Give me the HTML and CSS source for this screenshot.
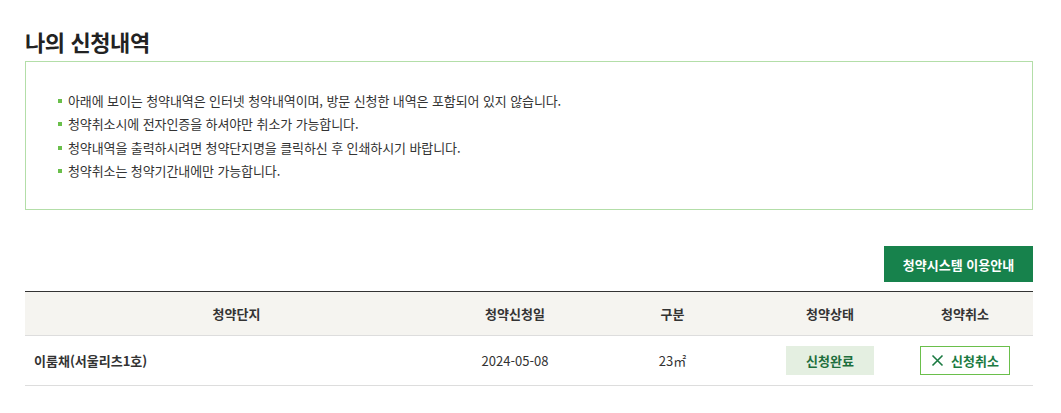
FILE: index.html
```html
<!DOCTYPE html>
<html lang="ko">
<head>
<meta charset="utf-8">
<title>나의 신청내역</title>
<link rel="stylesheet" href="styles.css">
</head>
<body>
<div class="page">
  <h2 class="title">나의 신청내역</h2>
  <div class="notice">
    <ul class="notice-list">
      <li>아래에 보이는 청약내역은 인터넷 청약내역이며, 방문 신청한 내역은 포함되어 있지 않습니다.</li>
      <li>청약취소시에 전자인증을 하셔야만 취소가 가능합니다.</li>
      <li>청약내역을 출력하시려면 청약단지명을 클릭하신 후 인쇄하시기 바랍니다.</li>
      <li>청약취소는 청약기간내에만 가능합니다.</li>
    </ul>
  </div>
  <div class="btn-row">
    <a class="btn-guide" href="#">청약시스템 이용안내</a>
  </div>
  <table class="list">
    <colgroup>
      <col class="c1"><col class="c2"><col class="c3"><col class="c4"><col class="c5">
    </colgroup>
    <thead>
      <tr>
        <th>청약단지</th>
        <th>청약신청일</th>
        <th>구분</th>
        <th>청약상태</th>
        <th>청약취소</th>
      </tr>
    </thead>
    <tbody>
      <tr>
        <td class="name">이룸채(서울리츠1호)</td>
        <td>2024-05-08</td>
        <td>23㎡</td>
        <td><span class="status">신청완료</span></td>
        <td><a class="btn-cancel" href="#"><svg width="13" height="13" viewBox="0 0 13 13" aria-hidden="true"><path d="M1.5 1.5L11.5 11.5M11.5 1.5L1.5 11.5" stroke="#1b7a42" stroke-width="1.6" fill="none"/></svg>신청취소</a></td>
      </tr>
    </tbody>
  </table>
</div>
</body>
</html>
```
FILE: styles.css
```css
html, body {
  margin: 0;
  padding: 0;
  background: #fff;
}
body {
  font-family: "Noto Sans CJK KR", "Noto Sans", sans-serif;
  color: #333;
  font-size: 13px;
}
.page {
  width: 1008px;
  margin-left: 25px;
  padding-top: 27px;
}
.title {
  margin: 0 0 6px;
  font-size: 22px;
  line-height: 28px;
  font-weight: 700;
  color: #222;
  letter-spacing: -0.4px;
}
.notice {
  border: 1px solid #b3dea8;
  padding: 27px 32px 27px 32px;
}
.notice-list {
  margin: 0;
  padding: 0;
  list-style: none;
}
.notice-list li {
  position: relative;
  padding-left: 10px;
  line-height: 23.3px;
  font-size: 13px;
  color: #333;
  letter-spacing: -0.1px;
}
.notice-list li::before {
  content: "";
  position: absolute;
  left: 0;
  top: 10px;
  width: 4px;
  height: 4px;
  background: #6abf4b;
}
.btn-row {
  display: flex;
  justify-content: flex-end;
  margin-top: 36px;
  margin-bottom: 9px;
}
.btn-guide {
  display: flex;
  align-items: center;
  justify-content: center;
  width: 149px;
  height: 36px;
  background: #17824c;
  color: #fff;
  font-weight: 700;
  font-size: 13px;
  text-decoration: none;
}
.list {
  width: 100%;
  border-collapse: collapse;
  table-layout: fixed;
  border-top: 1px solid #333;
}
.c1 { width: 423px; }
.c2 { width: 134px; }
.c3 { width: 181px; }
.c4 { width: 134px; }
.c5 { width: 136px; }
.list th {
  background: #f5f4f0;
  height: 43px;
  padding: 0;
  font-weight: 700;
  font-size: 13px;
  color: #333;
  border-bottom: 1px solid #ddd;
  text-align: center;
}
.list td {
  height: 49px;
  padding: 0;
  text-align: center;
  font-size: 13px;
  color: #333;
  border-bottom: 1px solid #ddd;
}
.list td.name {
  text-align: left;
  padding-left: 9px;
  font-weight: 700;
}
.status {
  display: inline-flex;
  align-items: center;
  justify-content: center;
  width: 88px;
  height: 29px;
  background: #e4efe1;
  color: #1d6e3c;
  font-weight: 700;
}
.btn-cancel {
  display: inline-flex;
  align-items: center;
  justify-content: center;
  gap: 7px;
  width: 88px;
  height: 27px;
  border: 1px solid #6abf4b;
  color: #1b7a42;
  font-weight: 700;
  text-decoration: none;
}
```
